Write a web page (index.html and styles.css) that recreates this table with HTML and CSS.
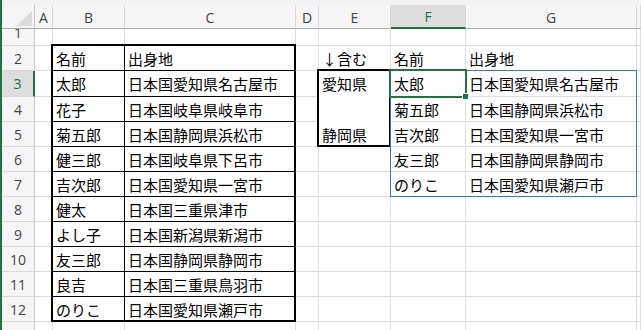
FILE: index.html
```html
<!DOCTYPE html>
<html lang="ja">

<head>
    <meta charset="UTF-8">
    <meta name="viewport" content="width=device-width, initial-scale=1.0">
    <title>名簿</title>
    <link rel="stylesheet" href="styles.css">
</head>

<body>

    <div class="app">
        <div class="edge"></div>
        <div class="main">
            <div class="strip"></div>
            <div class="wrap">

                <!-- cells, row by row: row number + columns A..H -->
                <div class="grid sheet">
                    <div class="corner"><span class="tri"></span></div>
                    <div class="ch">A</div><div class="ch">B</div><div class="ch">C</div><div class="ch">D</div>
                    <div class="ch">E</div><div class="ch sel">F</div><div class="ch">G</div><div class="ch"></div>

                    <div class="rh r1"><span>1</span></div>
                    <div class="c"></div><div class="c"></div><div class="c"></div><div class="c"></div>
                    <div class="c"></div><div class="c"></div><div class="c"></div><div class="c"></div>

                    <div class="rh">2</div>
                    <div class="c"></div><div class="c k">名前</div><div class="c k">出身地</div><div class="c"></div>
                    <div class="c">↓含む</div><div class="c">名前</div><div class="c">出身地</div><div class="c"></div>

                    <div class="rh sel">3</div>
                    <div class="c"></div><div class="c k">太郎</div><div class="c k">日本国愛知県名古屋市</div><div class="c"></div>
                    <div class="c nf">愛知県</div><div class="c">太郎</div><div class="c">日本国愛知県名古屋市</div><div class="c"></div>

                    <div class="rh">4</div>
                    <div class="c"></div><div class="c k">花子</div><div class="c k">日本国岐阜県岐阜市</div><div class="c"></div>
                    <div class="c nf"></div><div class="c">菊五郎</div><div class="c">日本国静岡県浜松市</div><div class="c"></div>

                    <div class="rh">5</div>
                    <div class="c"></div><div class="c k">菊五郎</div><div class="c k">日本国静岡県浜松市</div><div class="c"></div>
                    <div class="c">静岡県</div><div class="c">吉次郎</div><div class="c">日本国愛知県一宮市</div><div class="c"></div>

                    <div class="rh">6</div>
                    <div class="c"></div><div class="c k">健三郎</div><div class="c k">日本国岐阜県下呂市</div><div class="c"></div>
                    <div class="c"></div><div class="c">友三郎</div><div class="c">日本国静岡県静岡市</div><div class="c"></div>

                    <div class="rh">7</div>
                    <div class="c"></div><div class="c k">吉次郎</div><div class="c k">日本国愛知県一宮市</div><div class="c"></div>
                    <div class="c"></div><div class="c">のりこ</div><div class="c">日本国愛知県瀬戸市</div><div class="c"></div>

                    <div class="rh">8</div>
                    <div class="c"></div><div class="c k">健太</div><div class="c k">日本国三重県津市</div><div class="c"></div>
                    <div class="c"></div><div class="c"></div><div class="c"></div><div class="c"></div>

                    <div class="rh">9</div>
                    <div class="c"></div><div class="c k">よし子</div><div class="c k">日本国新潟県新潟市</div><div class="c"></div>
                    <div class="c"></div><div class="c"></div><div class="c"></div><div class="c"></div>

                    <div class="rh">10</div>
                    <div class="c"></div><div class="c k">友三郎</div><div class="c k">日本国静岡県静岡市</div><div class="c"></div>
                    <div class="c"></div><div class="c"></div><div class="c"></div><div class="c"></div>

                    <div class="rh">11</div>
                    <div class="c"></div><div class="c k">良吉</div><div class="c k">日本国三重県鳥羽市</div><div class="c"></div>
                    <div class="c"></div><div class="c"></div><div class="c"></div><div class="c"></div>

                    <div class="rh">12</div>
                    <div class="c"></div><div class="c k">のりこ</div><div class="c k">日本国愛知県瀬戸市</div><div class="c"></div>
                    <div class="c"></div><div class="c"></div><div class="c"></div><div class="c"></div>

                    <div class="rh"></div>
                    <div class="c"></div><div class="c"></div><div class="c"></div><div class="c"></div>
                    <div class="c"></div><div class="c"></div><div class="c"></div><div class="c"></div>
                </div>

                <!-- range outlines drawn on top of the cells -->
                <div class="grid marks">
                    <div class="box names"></div>
                    <div class="box terms"></div>
                    <div class="spill"></div>
                    <div class="cursor"><span class="handle"></span></div>
                </div>

            </div>
        </div>
    </div>

</body>

</html>
```

FILE: styles.css
```css
body {
    margin: 0;
    background: #fff;
    overflow: hidden;
}

.app {
    display: flex;
    height: 330px;
}

.edge {
    width: 2px;
    background: #217346;
}

.main {
    flex: 1;
    display: flex;
    flex-direction: column;
}

.strip {
    height: 5px;
    background: #f3f3f3;
}

.wrap {
    position: relative;
    flex: 1;
    overflow: hidden;
}

/* same tracks for the cells and for the outline layer */
.grid {
    display: grid;
    grid-template-columns: 33px 18px 72px 171px 23px 72px 75px 171px 1fr;
    grid-template-rows: 24px 17px 25px 26px repeat(9, 25px) 25px;
}

.marks {
    position: absolute;
    inset: 0;
    pointer-events: none;
}

/* headers */
.corner,
.ch,
.rh {
    background: #f5f5f5;
    color: #444;
    font-family: "Open Sans", "Noto Sans", sans-serif;
    font-size: 14px;
    display: flex;
    align-items: center;
    justify-content: center;
    box-sizing: border-box;
}

.corner {
    position: relative;
    border-right: 1px solid #c8c8c8;
    border-bottom: 1px solid #ababab;
}

.tri {
    position: absolute;
    right: 2px;
    bottom: 2px;
    width: 16px;
    height: 15px;
    background: #dcdcdc;
    clip-path: polygon(100% 0, 100% 100%, 0 100%);
}

.ch {
    border-right: 1px solid #dadada;
    border-bottom: 1px solid #ababab;
    padding-top: 1px;
}

.ch.sel {
    background: #dddddd;
    color: #217346;
    border-bottom: 2px solid #217346;
}

.rh {
    border-right: 1px solid #c8c8c8;
    border-bottom: 1px solid #dadada;
    overflow: hidden;
}

.rh.sel {
    background: #dddddd;
    color: #217346;
    border-right: 2px solid #217346;
}

.rh.r1 {
    align-items: flex-end;
}

.rh.r1 span {
    height: 24px;
    line-height: 24px;
    flex: none;
}

/* cells */
.c {
    box-sizing: border-box;
    border-right: 1px solid #dedede;
    border-bottom: 1px solid #dedede;
    padding-left: 3px;
    display: flex;
    align-items: center;
    white-space: nowrap;
    font-family: "Noto Sans CJK JP", "Noto Sans", sans-serif;
    font-size: 15px;
    color: #000;
}

.c.k {
    border-right-color: #000;
    border-bottom-color: #000;
}

.c.nf {
    border-bottom-color: #fff;
}

/* outlines */
.box {
    border: 2px solid #000;
    margin: -2px 0 0 -2px;
}

.names {
    grid-column: 3 / 5;
    grid-row: 3 / 14;
}

.terms {
    grid-column: 6 / 7;
    grid-row: 4 / 7;
}

.spill {
    grid-column: 7 / 9;
    grid-row: 4 / 9;
    border: 1px solid #3a75c8;
    margin: -1px 0 0 -1px;
}

.cursor {
    grid-column: 7 / 8;
    grid-row: 4 / 5;
    position: relative;
    border: 2px solid #217346;
    margin: -2px -1px -1px -2px;
}

.handle {
    position: absolute;
    right: -4px;
    bottom: -4px;
    width: 7px;
    height: 7px;
    box-sizing: border-box;
    background: #217346;
    border: 1px solid #fff;
}
```
